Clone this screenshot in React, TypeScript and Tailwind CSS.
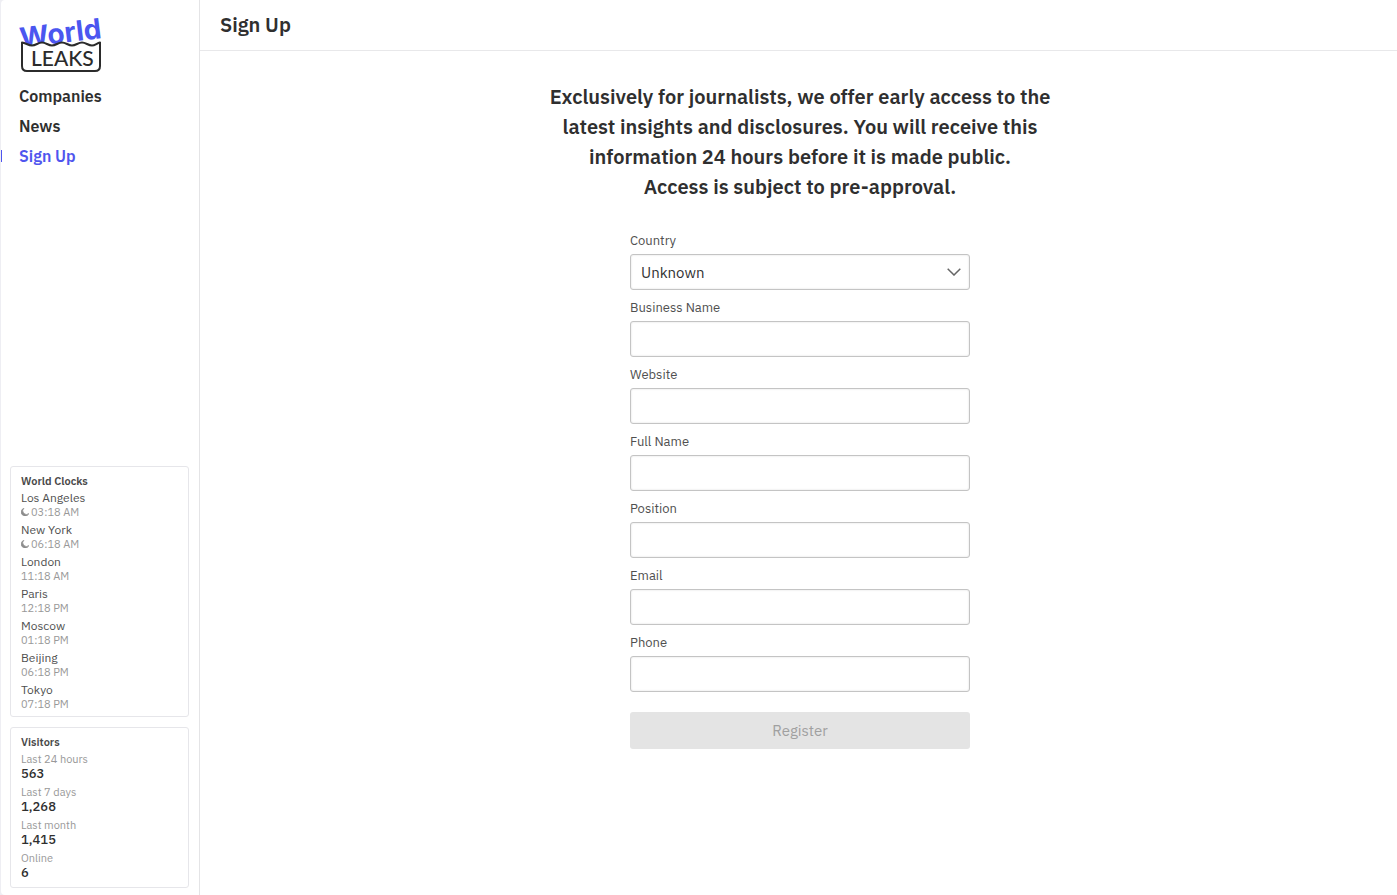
import React from "react";

const navigation = [
  { label: "Companies", active: false },
  { label: "News", active: false },
  { label: "Sign Up", active: true },
];

const clocks = [
  { city: "Los Angeles", time: "03:18 AM", night: true },
  { city: "New York", time: "06:18 AM", night: true },
  { city: "London", time: "11:18 AM", night: false },
  { city: "Paris", time: "12:18 PM", night: false },
  { city: "Moscow", time: "01:18 PM", night: false },
  { city: "Beijing", time: "06:18 PM", night: false },
  { city: "Tokyo", time: "07:18 PM", night: false },
];

const visitors = [
  { label: "Last 24 hours", value: "563" },
  { label: "Last 7 days", value: "1,268" },
  { label: "Last month", value: "1,415" },
  { label: "Online", value: "6" },
];

const fields = [
  { id: "business", label: "Business Name", type: "text" },
  { id: "website", label: "Website", type: "text" },
  { id: "fullname", label: "Full Name", type: "text" },
  { id: "position", label: "Position", type: "text" },
  { id: "email", label: "Email", type: "email" },
  { id: "phone", label: "Phone", type: "tel" },
];

const labelClass = "mb-1 block text-[13px] leading-[18px] text-[#505050]";

const controlClass =
  "block h-9 w-full appearance-none rounded-[3px] border border-[#c4c4c4] bg-white px-2.5 pt-0.5 text-[15px] text-[#333] shadow-[inset_0_0_2px_rgba(0,0,0,0.15)] outline-none";

function Logo() {
  return (
    <svg width="92" height="66" viewBox="0 -8 92 66" className="block" role="img" aria-label="World Leaks">
      <text
        x="2"
        y="32"
        transform="rotate(-7 2 32)"
        fontFamily="Inter, sans-serif"
        fontWeight="700"
        fontSize="28"
        fill="#4b56f0"
      >
        World
      </text>
      <path
        d="M3 26.5 C7 27 9 29.5 13 29.5 C17 29.5 19 26.5 23 26.5 C27 26.5 29 29.5 33 29.5 C37 29.5 39 26.5 43 26.5 C47 26.5 49 29.5 53 29.5 C57 29.5 59 26.5 63 26.5 C67 26.5 69 29.5 73 29.5 C76 29.5 78 27 81 26.5 V50 Q81 55 76 55 H8 Q3 55 3 50 Z"
        fill="#fff"
        stroke="#2b2b2b"
        strokeWidth="2"
        strokeLinejoin="round"
      />
      <text x="12" y="50" fontFamily="Lato, sans-serif" fontWeight="500" fontSize="21" fill="#2b2b2b">
        LEAKS
      </text>
    </svg>
  );
}

function Moon() {
  return (
    <svg width="8" height="8" viewBox="0 0 8 8" className="mr-0.5 block" aria-hidden="true">
      <path d="M3 0.2 A4 4 0 1 0 7.9 5.4 A3.3 3.3 0 0 1 3 0.2 Z" fill="#8c8c8c" stroke="#8c8c8c" strokeWidth="0.6" />
    </svg>
  );
}

export default function App() {
  return (
    <div className="min-h-screen bg-[#eeeef3] pl-px font-['IBM_Plex_Sans',Roboto,sans-serif] text-[#2f2f2f]">
      <div className="flex min-h-screen rounded-l-[4px] bg-white">
        <aside className="flex w-[199px] shrink-0 flex-col justify-between border-r border-[#e4e4e6] pt-2 pb-[7px]">
          <div>
            <a href="#home" className="ml-[18px] block w-[92px]">
              <Logo />
            </a>
            <nav className="mt-[7px]">
              {navigation.map((item) => (
                <a
                  key={item.label}
                  href="#page"
                  aria-current={item.active ? "page" : undefined}
                  className={
                    item.active
                      ? "flex h-[30px] items-center text-base font-semibold text-[#4f55ee] before:h-3 before:w-px before:bg-[#4f55ee]"
                      : "flex h-[30px] items-center text-base font-semibold before:h-3 before:w-px"
                  }
                >
                  <span className="pl-[17px]">{item.label}</span>
                </a>
              ))}
            </nav>
          </div>

          <div className="flex flex-col gap-2.5 pr-2.5 pl-[9px]">
            <section className="rounded-[3px] border border-[#e6e6ea] px-2.5 pt-1.5 pb-[5px]">
              <h2 className="mb-0.5 text-[11px] leading-4 font-semibold text-[#484848]">World Clocks</h2>
              <ul className="flex flex-col gap-1">
                {clocks.map((clock) => (
                  <li key={clock.city}>
                    <div className="text-xs leading-[14px] text-[#505050]">{clock.city}</div>
                    <div className="flex items-center text-[11px] leading-[14px] text-[#999]">
                      {clock.night && <Moon />}
                      {clock.time}
                    </div>
                  </li>
                ))}
              </ul>
            </section>
            <section className="rounded-[3px] border border-[#e6e6ea] px-2.5 pt-1.5 pb-[7px]">
              <h2 className="mb-0.5 text-[11px] leading-4 font-semibold text-[#484848]">Visitors</h2>
              <dl className="flex flex-col gap-1">
                {visitors.map((entry) => (
                  <div key={entry.label}>
                    <dt className="text-[11px] leading-[14px] text-[#999]">{entry.label}</dt>
                    <dd className="text-[13px] leading-[15px] font-medium">{entry.value}</dd>
                  </div>
                ))}
              </dl>
            </section>
          </div>
        </aside>

        <div className="min-w-0 flex-1">
          <header className="flex h-[51px] items-center border-b border-[#e8e8ea] px-5">
            <h1 className="text-xl font-semibold">Sign Up</h1>
          </header>
          <main className="flex flex-col items-center pt-[31px] pl-[3px]">
            <p className="text-center text-xl leading-[30px] font-semibold">
              Exclusively for journalists, we offer early access to the
              <br />
              latest insights and disclosures. You will receive this
              <br />
              information 24 hours before it is made public.
              <br />
              Access is subject to pre-approval.
            </p>
            <form className="mt-[30px] flex w-full max-w-[340px] flex-col gap-[9px]" onSubmit={(e) => e.preventDefault()}>
              <div>
                <label htmlFor="country" className={labelClass}>
                  Country
                </label>
                <div className="relative">
                  <select id="country" className={controlClass}>
                    <option>Unknown</option>
                  </select>
                  <svg
                    width="14"
                    height="8"
                    viewBox="0 0 14 8"
                    className="pointer-events-none absolute top-3.5 right-[9px]"
                    aria-hidden="true"
                  >
                    <path d="M0.7 0.7 L7 7 L13.3 0.7" fill="none" stroke="#666" strokeWidth="1.5" />
                  </svg>
                </div>
              </div>
              {fields.map((field) => (
                <div key={field.id}>
                  <label htmlFor={field.id} className={labelClass}>
                    {field.label}
                  </label>
                  <input id={field.id} type={field.type} className={controlClass} />
                </div>
              ))}
              <button
                type="submit"
                disabled
                className="mt-[11px] h-[37px] rounded-[3px] bg-[#e4e4e4] pt-0.5 text-[15px] text-[#a0a0a0]"
              >
                Register
              </button>
            </form>
          </main>
        </div>
      </div>
    </div>
  );
}
